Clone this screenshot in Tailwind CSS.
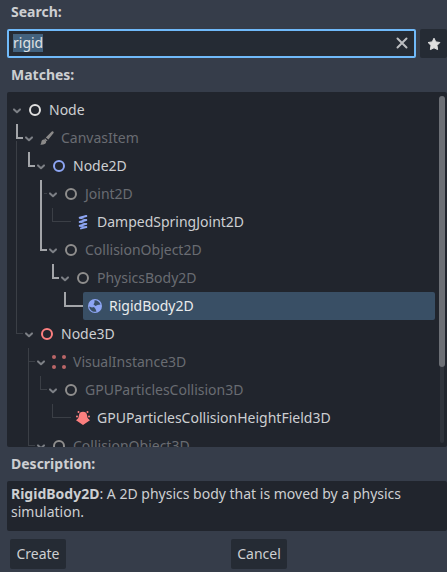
<!DOCTYPE html>
<html lang="en">
<head>
<meta charset="utf-8">
<meta name="viewport" content="width=device-width, initial-scale=1">
<title>Create New Node</title>
<script src="https://cdn.jsdelivr.net/npm/@tailwindcss/browser@4"></script>
</head>
<body class="flex h-screen flex-col overflow-hidden bg-[#363d4a] pl-[7px] font-['Noto_Sans',sans-serif] text-sm leading-[18px] text-[#cdcfd2]">
  <svg class="hidden" aria-hidden="true">
    <symbol id="chevron" viewBox="0 0 12 28"><path d="M3 13.4 6 16.2 9 13.4" fill="none" stroke="#7d8086" stroke-width="2" stroke-linecap="round" stroke-linejoin="round"/></symbol>
    <symbol id="ring" viewBox="0 0 16 16"><circle cx="8" cy="8" r="5" fill="none" stroke="currentColor" stroke-width="2"/></symbol>
  </svg>

  <label for="search" class="block px-1 pt-[3px] pb-2 font-bold">Search:</label>
  <div class="flex h-[29px] shrink-0 gap-1">
    <div class="flex min-w-0 flex-1 items-center rounded-[2px] border-2 border-[#70bafa] bg-[#252b34] px-1 pb-px">
      <input id="search" type="text" value="rigid" class="h-[18px] min-w-0 flex-1 bg-transparent leading-[18px] text-[#e0e2e4] outline-none selection:bg-[#44637f]/99 selection:text-[#e0e2e4]">
      <button type="button" aria-label="Clear" class="size-4">
        <svg viewBox="0 0 16 16" class="size-4"><path d="M3.5 3.5l9 9m0-9l-9 9" stroke="#bcbec1" stroke-width="2" stroke-linecap="round"/></svg>
      </button>
    </div>
    <button type="button" aria-label="Favorite" class="flex w-[27px] items-center justify-center rounded-[2px] bg-[#252b34]">
      <svg viewBox="0 0 16 16" class="size-4"><path d="M8 2.2 9.8 5.9 13.9 6.5 11 9.4 11.6 13.6 8 11.8 4.4 13.6 5 9.4 2.1 6.5 6.2 5.9Z" fill="#e0e0e0" stroke="#e0e0e0" stroke-linejoin="round"/></svg>
    </button>
  </div>

  <h2 id="matches" class="px-1 pt-2 pb-2 font-bold">Matches:</h2>
  <div class="flex min-h-0 flex-1 rounded-[2px] bg-[#21252d] pt-1 pr-[2px] pl-1">
    <ul role="tree" aria-labelledby="matches" class="min-w-0 flex-1 overflow-hidden">
      <li role="treeitem" aria-level="1" aria-expanded="true" class="flex h-7">
        <button type="button" aria-label="Collapse Node"><svg class="h-7 w-3"><use href="#chevron"/></svg></button>
        <span class="flex flex-1 items-center gap-1.5 pl-1"><svg class="size-4 text-[#e0e0e0]"><use href="#ring"/></svg>Node</span>
      </li>
      <li role="treeitem" aria-level="2" aria-expanded="true" class="flex h-7">
        <svg class="h-7 w-3" fill="#a3a5a9"><path d="M5 0h2v13h5v2H5z"/><path d="M5 17h1v11H5z" fill="#3b3f46"/></svg>
        <button type="button" aria-label="Collapse CanvasItem"><svg class="h-7 w-3"><use href="#chevron"/></svg></button>
        <span class="flex flex-1 items-center gap-1.5 pl-1 text-[#696c72]"><svg class="size-4" viewBox="0 0 16 16" fill="#8b8a89"><path d="M12.800 1.400c.9-.7 2.400.5 1.800 1.600L9.400 9.600 6.800 7.400zM6 8.300l2.500 2.100-.8.9-2.400-2zM4.600 9.600c1.500.1 2.600 1 2.600 2.400C7 14.200 4 15 1 14.600c1.200-.8 1.200-1.600 1.400-2.800.2-1.300 1-2.100 2.200-2.200z"/></svg>CanvasItem</span>
      </li>
      <li role="treeitem" aria-level="3" aria-expanded="true" class="flex h-7">
        <svg class="h-7 w-6" fill="#a3a5a9"><path d="M17 0h2v13h5v2h-7z"/><path d="M5 0h1v28H5z" fill="#3b3f46"/></svg>
        <button type="button" aria-label="Collapse Node2D"><svg class="h-7 w-3"><use href="#chevron"/></svg></button>
        <span class="flex flex-1 items-center gap-1.5 pl-1"><svg class="size-4 text-[#8da5f3]"><use href="#ring"/></svg>Node2D</span>
      </li>
      <li role="treeitem" aria-level="4" aria-expanded="true" class="flex h-7">
        <svg class="h-7 w-9" fill="#3b3f46"><path d="M5 0h1v28H5zM33 13h3v1h-3z"/><path d="M29 0h2v28h-2z" fill="#a3a5a9"/></svg>
        <button type="button" aria-label="Collapse Joint2D"><svg class="h-7 w-3"><use href="#chevron"/></svg></button>
        <span class="flex flex-1 items-center gap-1.5 pl-1 text-[#696c72]"><svg class="size-4 text-[#8f8e8d]"><use href="#ring"/></svg>Joint2D</span>
      </li>
      <li role="treeitem" aria-level="5" class="flex h-7">
        <svg class="h-7 w-15" fill="#3b3f46"><path d="M5 0h1v28H5zM41 0h1v13h18v1H41z"/><path d="M29 0h2v28h-2z" fill="#a3a5a9"/></svg>
        <span class="flex flex-1 items-center gap-1.5 pl-1"><svg class="size-4" viewBox="0 0 16 16" fill="none" stroke="#8da5f3" stroke-linecap="round" stroke-linejoin="round"><path d="M11.300 2 4.700 4 11.300 6 4.700 8 11.300 10 4.700 12 11.300 13.500" stroke-width="1"/><path d="M11.300 2 4.700 3.800M11.300 6 4.700 7.900M11.300 9.900 4.700 11.800M11.300 13 6 14.400" stroke-width="2"/></svg>DampedSpringJoint2D</span>
      </li>
      <li role="treeitem" aria-level="4" aria-expanded="true" class="flex h-7">
        <svg class="h-7 w-9" fill="#a3a5a9"><path d="M29 0h2v13h5v2h-7z"/><path d="M5 0h1v28H5z" fill="#3b3f46"/></svg>
        <button type="button" aria-label="Collapse CollisionObject2D"><svg class="h-7 w-3"><use href="#chevron"/></svg></button>
        <span class="flex flex-1 items-center gap-1.5 pl-1 text-[#696c72]"><svg class="size-4 text-[#8f8e8d]"><use href="#ring"/></svg>CollisionObject2D</span>
      </li>
      <li role="treeitem" aria-level="5" aria-expanded="true" class="flex h-7">
        <svg class="h-7 w-12" fill="#a3a5a9"><path d="M41 0h2v13h5v2h-7z"/><path d="M5 0h1v28H5z" fill="#3b3f46"/></svg>
        <button type="button" aria-label="Collapse PhysicsBody2D"><svg class="h-7 w-3"><use href="#chevron"/></svg></button>
        <span class="flex flex-1 items-center gap-1.5 pl-1 text-[#696c72]"><svg class="size-4 text-[#8f8e8d]"><use href="#ring"/></svg>PhysicsBody2D</span>
      </li>
      <li role="treeitem" aria-level="6" aria-selected="true" class="flex h-7">
        <svg class="h-7 w-18" fill="#a3a5a9"><path d="M53 0h2v13h17v2H53z"/><path d="M5 0h1v28H5z" fill="#3b3f46"/></svg>
        <span class="mr-1 flex flex-1 items-center gap-1.5 rounded-[2px] bg-[#394f65] pl-1 text-[#e9ebed]"><svg class="size-4" viewBox="0 0 16 16"><circle cx="8" cy="8" r="7" fill="#8da5f3"/><path d="M7.500 2.200c2.600-.2 5.100 1.400 6 4.300L10.500 7 8.500 8 6.500 6.500 7.500 4.500zM2.200 8.600 5 9.500l2-.5 1.500 2 1 2.600C6.200 14.600 2.600 12.500 2.200 8.600z" fill="#394f65"/></svg>RigidBody2D</span>
      </li>
      <li role="treeitem" aria-level="2" aria-expanded="true" class="flex h-7">
        <svg class="h-7 w-3" fill="#3b3f46"><path d="M5 0h1v13h6v1H5z"/></svg>
        <button type="button" aria-label="Collapse Node3D"><svg class="h-7 w-3"><use href="#chevron"/></svg></button>
        <span class="flex flex-1 items-center gap-1.5 pl-1"><svg class="size-4 text-[#fc7f7f]"><use href="#ring"/></svg>Node3D</span>
      </li>
      <li role="treeitem" aria-level="3" aria-expanded="true" class="flex h-7">
        <svg class="h-7 w-6" fill="#3b3f46"><path d="M17 0h1v13h6v1h-6v14h-1z"/></svg>
        <button type="button" aria-label="Collapse VisualInstance3D"><svg class="h-7 w-3"><use href="#chevron"/></svg></button>
        <span class="flex flex-1 items-center gap-1.5 pl-1 text-[#696c72]"><svg class="size-4" viewBox="0 0 16 16" fill="#b96667"><circle cx="3" cy="3" r="2"/><circle cx="13" cy="3" r="2"/><circle cx="3" cy="13" r="2"/><circle cx="13" cy="13" r="2"/></svg>VisualInstance3D</span>
      </li>
      <li role="treeitem" aria-level="4" aria-expanded="true" class="flex h-7">
        <svg class="h-7 w-9" fill="#3b3f46"><path d="M17 0h1v28h-1zM29 0h1v13h6v1h-7z"/></svg>
        <button type="button" aria-label="Collapse GPUParticlesCollision3D"><svg class="h-7 w-3"><use href="#chevron"/></svg></button>
        <span class="flex flex-1 items-center gap-1.5 pl-1 text-[#696c72]"><svg class="size-4 text-[#8f8e8d]"><use href="#ring"/></svg>GPUParticlesCollision3D</span>
      </li>
      <li role="treeitem" aria-level="5" class="flex h-7">
        <svg class="h-7 w-15" fill="#3b3f46"><path d="M17 0h1v28h-1zM41 0h1v13h18v1H41z"/></svg>
        <span class="flex flex-1 items-center gap-1.5 pl-1"><svg class="size-4" viewBox="0 0 16 16" fill="#fc7f7f"><path d="M8 1.800c2.300 0 3.600 1.200 4 3.200.4 2 .3 3 1.300 3.700L15 10.300 8 15 1 10.300 2.700 8.700C3.700 8 3.600 7 4 5c.4-2 1.700-3.200 4-3.200z"/><circle cx="3.500" cy="2" r="1"/><circle cx="12.500" cy="2" r="1"/><circle cx="2" cy="6.500" r="1"/><circle cx="14" cy="6.500" r="1"/></svg>GPUParticlesCollisionHeightField3D</span>
      </li>
      <li role="treeitem" aria-level="3" aria-expanded="true" class="flex h-7">
        <svg class="h-7 w-6" fill="#3b3f46"><path d="M17 0h1v13h6v1h-7z"/></svg>
        <button type="button" aria-label="Collapse CollisionObject3D"><svg class="h-7 w-3"><use href="#chevron"/></svg></button>
        <span class="flex flex-1 items-center gap-1.5 pl-1 text-[#696c72]"><svg class="size-4 text-[#8f8e8d]"><use href="#ring"/></svg>CollisionObject3D</span>
      </li>
    </ul>
    <div aria-hidden="true" class="mb-1 flex w-[6px] flex-col items-center">
      <div class="h-[78%] w-[6px] rounded-full bg-[#6c6f75]"></div>
      <div class="w-1 flex-1 rounded-b-full bg-[#2f333b]"></div>
    </div>
  </div>

  <h2 class="px-1 pt-2 pb-2 font-bold">Description:</h2>
  <p class="h-[50px] shrink-0 rounded-[2px] bg-[#21252d] px-1 pt-1"><b>RigidBody2D</b>: A 2D physics body that is moved by a physics simulation.</p>

  <div class="grid grid-cols-2 justify-items-start gap-2 px-[3px] pt-2 pb-[3px]">
    <button type="button" class="h-[30px] w-14 rounded-[2px] bg-[#252b34]">Create</button>
    <button type="button" class="h-[30px] w-14 rounded-[2px] bg-[#252b34]">Cancel</button>
  </div>
  <script>
    const search = document.getElementById('search');
    search.focus();
    search.select();
  </script>
</body>
</html>
